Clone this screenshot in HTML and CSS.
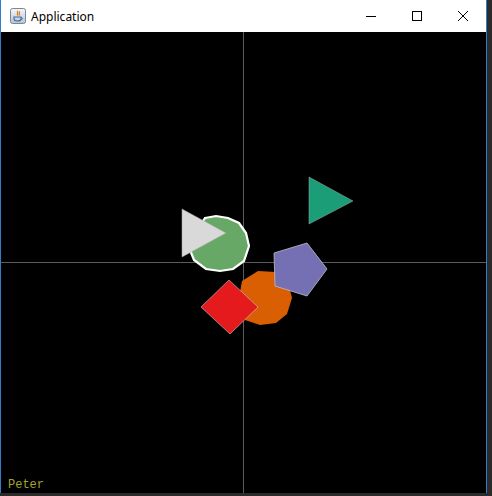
FILE: index.html
```html
<!DOCTYPE html>
<html>
<head>
<meta charset="utf-8">
<link rel="stylesheet" href="styles.css">
</head>
<body>
<div class="desk">
  <div class="window">
    <div class="titlebar">
      <svg class="appicon" width="16" height="16" viewBox="0 0 16 16">
        <defs>
          <linearGradient id="g" x1="0" y1="0" x2="0" y2="1">
            <stop offset="0" stop-color="#f4f6f9"/>
            <stop offset="1" stop-color="#b9c3d0"/>
          </linearGradient>
        </defs>
        <rect x="0.5" y="0.5" width="15" height="15" rx="2" fill="url(#g)" stroke="#7b8796"/>
        <path d="M7 3 C9 4.5 6 5.5 8 7.5 M9 3.5 C10.5 5 8.5 6 9.5 7.5" stroke="#e07b1a" stroke-width="1.2" fill="none"/>
        <path d="M4 9 H11 V11 C11 12.5 9.5 13 7.5 13 C5.5 13 4 12.5 4 11 Z" fill="none" stroke="#3d6aa8" stroke-width="1.1"/>
        <path d="M11 9.5 C13 9.5 13 11.5 11 11.5" fill="none" stroke="#3d6aa8" stroke-width="1"/>
      </svg>
      <span class="title">Application</span>
      <div class="controls">
        <div class="ctl"><svg width="10" height="10" viewBox="0 0 10 10"><path d="M0 5.5 H10" stroke="#000" stroke-width="1"/></svg></div>
        <div class="ctl"><svg width="10" height="10" viewBox="0 0 10 10"><rect x="0.5" y="0.5" width="9" height="9" fill="none" stroke="#000" stroke-width="1"/></svg></div>
        <div class="ctl"><svg width="10" height="10" viewBox="0 0 10 10"><path d="M0 0 L10 10 M10 0 L0 10" stroke="#000" stroke-width="1"/></svg></div>
      </div>
    </div>
    <div class="canvas">
      <svg class="scene" width="485" height="461" viewBox="1 32 485 461">
        <line x1="243.5" y1="32" x2="243.5" y2="493" stroke="#5c5c5c" stroke-width="1"/>
        <line x1="1" y1="262.5" x2="486" y2="262.5" stroke="#5c5c5c" stroke-width="1"/>
        <polygon points="309,177 353,201 309,224" fill="#1b9e77" stroke="#9aa" stroke-width="0.5"/>
        <polygon points="205,218 216,216 228,218 239,223 246,233 249,246 244,261 233,269 220,271 206,269 194,260 188,245" fill="#67a866" stroke="#ffffff" stroke-width="2.2"/>
        <polygon points="182,209 226,233 182,257" fill="#d9d9d9" stroke="#aaa" stroke-width="0.5"/>
        <polygon points="258,271 276,272 288,282 292,298 287,314 276,323 260,325 245,320 238,303 242,281" fill="#d95f02"/>
        <polygon points="307,243 327,269 307,296 275,286 274,253" fill="#7570b3" stroke="#c0c0c0" stroke-width="0.8"/>
        <polygon points="229,280 258,307 230,334 201,307" fill="#e41a1c" stroke="#c8c8c8" stroke-width="0.6"/>
      </svg>
      <span class="label">Peter</span>
    </div>
  </div>
</div>
</body>
</html>
```

FILE: styles.css
```css
html, body {
  margin: 0;
  padding: 0;
  background: #2b2b2b;
  width: 492px;
  height: 496px;
  overflow: hidden;
}
.desk {
  width: 492px;
  height: 496px;
}
.window {
  width: 485px;
  height: 492px;
  border: 1px solid #2f7fc8;
  border-top: none;
  background: #000;
  display: flex;
  flex-direction: column;
}
.titlebar {
  height: 32px;
  flex: none;
  background: #fff;
  display: flex;
  align-items: center;
  font-family: "Noto Sans", "Open Sans", sans-serif;
  font-size: 12px;
  color: #000;
}
.appicon {
  margin-left: 9px;
  margin-top: 0;
}
.title {
  margin-left: 5px;
  margin-top: 1px;
}
.controls {
  margin-left: auto;
  display: flex;
  height: 32px;
}
.ctl {
  width: 46px;
  height: 32px;
  display: flex;
  align-items: center;
  justify-content: center;
}
.canvas {
  position: relative;
  flex: 1;
  background: #000;
}
.scene {
  display: block;
}
.label {
  position: absolute;
  left: 7px;
  top: 446px;
  font-family: "Liberation Mono", monospace;
  font-size: 12px;
  color: #a5a52a;
}
```
